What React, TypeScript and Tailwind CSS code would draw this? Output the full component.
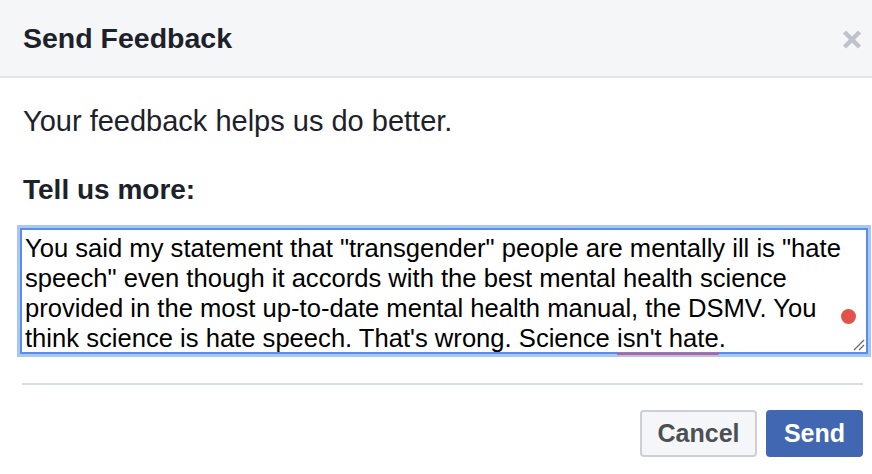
import React from "react";

export default function App() {
  const lines = [
    <>You said my statement that "transgender" people are mentally ill is "hate</>,
    <>speech" even though it accords with the best mental health science</>,
    <>provided in the most up-to-date mental health manual, the DSMV. You</>,
    <>
      think science is hate speech. That's wrong. Science{" "}
      <span className="underline decoration-[#d4587a] decoration-2 underline-offset-[6px]">isn't hate</span>.
    </>,
  ];
  return (
    <div className="w-[872px] h-[474px] bg-white font-['Liberation_Sans',Arial,sans-serif] text-[#1d2129] overflow-hidden">
      <div className="relative h-[78px] bg-[#f5f6f7] border-b-2 border-[#e5e5e5] flex items-center pl-[23px]">
        <h1 className="text-[28.5px] leading-none font-bold text-[#1d2129]">Send Feedback</h1>
        <svg className="absolute left-[842px] top-[30px]" width="20" height="19" viewBox="0 0 20 19">
          <path d="M2.5 2 L17.5 17 M17.5 2 L2.5 17" stroke="#bec2c9" strokeWidth="4.5" strokeLinecap="butt" />
        </svg>
      </div>
      <div className="pt-[25px]">
        <p className="pl-[23px] text-[29px] leading-[36px]">Your feedback helps us do better.</p>
        <p className="pl-[23px] mt-[33px] text-[28px] leading-[36px] font-bold">Tell us more:</p>
        <div className="mt-[20px] ml-[20px] w-[848px] h-[126px] relative border-2 border-[#5b8ee6] bg-white shadow-[0_0_0_3px_#a9c7f4] pl-[3px] pt-[3px] text-[25.6px] leading-[30px] text-black">
          {lines.map((l, i) => (
            <div key={i} className="whitespace-nowrap">{l}</div>
          ))}
          <div className="absolute left-[819px] top-[79px] w-[15px] h-[15px] rounded-full bg-[#e0524a]" />
          <svg className="absolute right-[1px] bottom-[1px]" width="14" height="14" viewBox="0 0 14 14">
            <path d="M3 13 L13 3 M8 13 L13 8" stroke="#6b6b6b" strokeWidth="1.3" />
          </svg>
        </div>
        <div className="mt-[29px] ml-[22px] w-[841px] h-[2px] bg-[#dadde1]" />
        <div className="mt-[25px] w-[863px] flex justify-end gap-[9px]">
          <button className="w-[117px] h-[47px] rounded-[4px] border-2 border-[#ccd0d5] bg-[#f5f6f7] text-[#4b4f56] text-[25px] font-bold flex items-center justify-center">
            Cancel
          </button>
          <button className="w-[97px] h-[47px] rounded-[4px] bg-[#4267b2] text-white text-[25px] font-bold flex items-center justify-center">
            Send
          </button>
        </div>
      </div>
    </div>
  );
}
